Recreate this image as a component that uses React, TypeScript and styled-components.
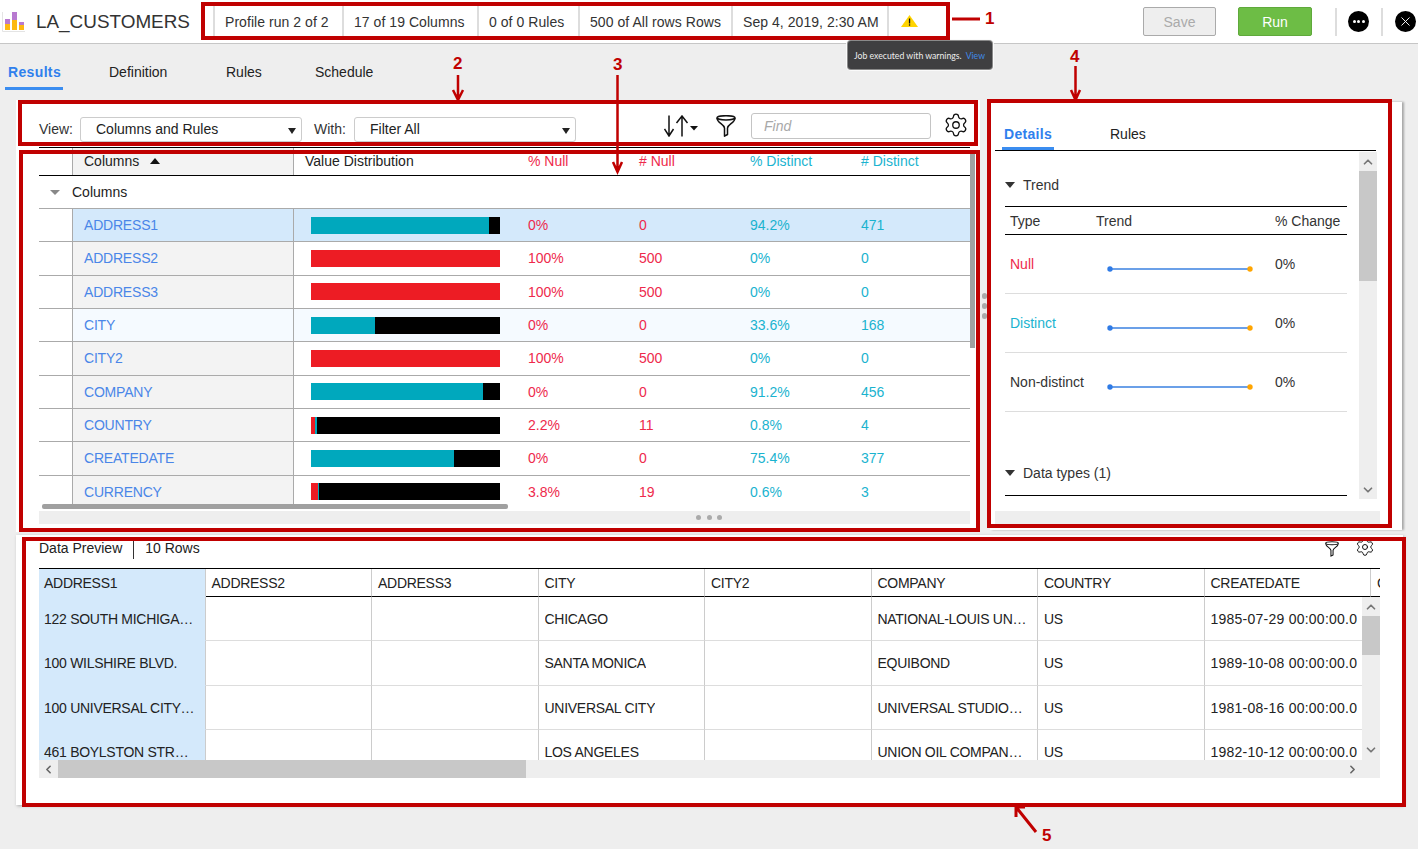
import React from 'react';
import styled, { createGlobalStyle } from 'styled-components';
import { ChevronUp, ChevronDown, ChevronLeft, ChevronRight, Settings, X } from 'lucide-react';

const Global = createGlobalStyle`
  html, body { margin: 0; padding: 0; background: #eeeeee; }
  body { font-family: "Liberation Sans", Arial, sans-serif; font-size: 14px; color: #222; }
  * { box-sizing: border-box; }
`;

const BLUE = '#4a86e8';
const RED = '#ee2a4c';
const TEAL = '#1ab3cf';
const ANNOT = '#c00000';

const Page = styled.div`position: relative; width: 1418px; height: 849px; overflow: hidden; background: #eeeeee;`;

/* header */
const Header = styled.header`display: flex; align-items: center; height: 44px; background: #fff; border-bottom: 1px solid #c6c6c6;`;
const LogoBox = styled.div`width: 36px; display: flex; align-items: center; height: 100%;`;
const Title = styled.h1`width: 177px; margin: 0; font-size: 18.9px; font-weight: 400; color: #333; white-space: nowrap; line-height: 43px;`;
const ChipBar = styled.div`display: grid; grid-template-columns: 129px 135px 101px 153px 156px 60px; height: 31px;`;
const Chip = styled.div`display: flex; align-items: center; padding-left: 10px; border-left: 2px solid #dddddd; color: #333; white-space: nowrap; letter-spacing: 0.05px;`;
const Actions = styled.div`margin-left: auto; display: flex; align-items: center; padding-right: 2px;`;
const SaveButton = styled.button`width: 73px; height: 29px; background: #eeeeee; border: 1px solid #aaa; border-radius: 2px; color: #aaa; font: inherit;`;
const RunButton = styled.button`width: 74px; height: 29px; margin-left: 22px; background: #6dbd45; border: 1px solid #5fa93b; border-radius: 2px; color: #fff; font: inherit;`;
const VDivider = styled.span`width: 2px; height: 28px; background: #dddddd; margin-left: ${p => p.$ml}px;`;
const RoundIcon = styled.span`width: 21px; height: 21px; margin-left: ${p => p.$ml}px; border-radius: 50%; background: #000; color: #fff; display: flex; align-items: center; justify-content: center; gap: 1.5px;`;
const Pip = styled.i`width: 3px; height: 3px; border-radius: 50%; background: #fff;`;

/* tooltip */
const Tooltip = styled.div`
  position: absolute; left: 848px; top: 41px; width: 144px; height: 28px; background: #3f3f41; color: #eee;
  border-radius: 3px; box-shadow: 0 0 0 1px #8a8a8a, 0 0 0 2px #fafafa; font-family: "Lato", sans-serif; font-size: 8.7px;
  display: flex; align-items: center; padding-left: 6px; white-space: nowrap; z-index: 2;
`;
const TooltipLink = styled.span`color: #3f8ae8; margin-left: 4px;`;

/* tabs */
const TabRow = styled.nav`display: grid; grid-template-columns: 101px 117px 89px 100px; height: 46px; padding-left: 5px; align-items: end;`;
const Tab = styled.div`
  justify-self: start; padding: 1px 3px 0; height: 34px; display: flex; align-items: center; white-space: nowrap;
  width: ${p => (p.$active ? '58px' : 'auto')};
  color: ${p => (p.$active ? '#2f80ed' : '#222')}; font-weight: ${p => (p.$active ? 700 : 400)};
  letter-spacing: ${p => (p.$active ? '0.35px' : '0')};
  border-bottom: 3px solid ${p => (p.$active ? '#3b8df0' : 'transparent')};
`;

const Top = styled.div`display: flex; margin-top: 10px; padding-left: 16px; height: 432px;`;

/* left card */
const LeftCard = styled.section`width: 964px; height: 432px; background: #fff;`;
const Toolbar = styled.div`display: flex; align-items: flex-end; height: 47px; padding: 0 0 5px 23px;`;
const FieldLabel = styled.label`width: ${p => p.$w}px; margin-left: ${p => p.$ml || 0}px; height: 25px; padding-bottom: 2px; display: flex; align-items: center; color: #333;`;
const Select = styled.div`
  position: relative; width: 222px; height: 25px; border: 1px solid #ccc; border-radius: 3px; background: #fff;
  display: flex; align-items: center; padding: 0 0 2px 15px; color: #222;
  &::after { content: ''; position: absolute; right: 5px; top: 10px; border: 4.5px solid transparent; border-top: 6px solid #222; border-bottom: 0; }
`;
const IconSlot = styled.span`display: flex; margin-left: ${p => p.$ml}px; margin-bottom: ${p => p.$mb || 0}px;`;
const FindInput = styled.div`
  width: 180px; height: 26px; margin-left: 15px; margin-bottom: 3px; border: 1px solid #c4c4c4; border-radius: 3px;
  display: flex; align-items: center; padding-left: 12px; font-style: italic; color: #a8a8a8;
`;

const TableWrap = styled.div`position: relative; margin-left: 23px; width: 931px; border-top: 1px solid #000;`;
const COLS = '34px 221px 234px 111px 111px 111px 109px';
const HeadRow = styled.div`display: grid; grid-template-columns: ${COLS}; height: 28px; border-bottom: 1px solid #000; color: #222;`;
const HeadCell = styled.div`display: flex; align-items: center; padding-left: ${p => p.$pl || 0}px; padding-bottom: 2px; color: ${p => p.$color || '#222'};`;
const HeadGutter = styled.div`border-right: 1px solid #aaa;`;
const HeadName = styled(HeadCell)`background: #f3f3f3; border-right: 1px solid #aaa;`;
const SortCaret = styled.i`margin-left: 11px; border: 5px solid transparent; border-bottom: 6px solid #111; border-top: 0;`;
const TableBody = styled.div`height: 328px; overflow: hidden;`;
const GroupRow = styled.div`display: flex; align-items: center; height: 33px; padding-left: 11px; border-bottom: 1px solid #aaa;`;
const GroupCaret = styled.i`width: 0; margin-right: 12px; border: 5.5px solid transparent; border-top: 5px solid #888; border-bottom: 0;`;
const Row = styled.div`
  display: grid; grid-template-columns: ${COLS}; height: 33.33px; border-bottom: 1px solid #aaa;
`;
const Gutter = styled.div`border-right: 1px solid #aaa;`;
const NameCell = styled.div`
  display: flex; align-items: center; padding-left: 11px; color: ${BLUE}; border-right: 1px solid #aaa; letter-spacing: -0.2px;
  background: ${p => p.$bg || '#f3f3f3'};
`;
const DistCell = styled.div`display: flex; align-items: center; padding-left: 17px; background: ${p => p.$bg || 'transparent'};`;
const Bar = styled.div`display: flex; width: 189px; height: 17px; background: #000;`;
const Seg = styled.div`height: 100%; background: ${p => p.$c};`;
const NumCell = styled.div`display: flex; align-items: center; color: ${p => p.$color}; background: ${p => p.$bg || 'transparent'};`;
const HThumb = styled.div`width: 466px; height: 5px; margin: 0 0 2px 3px; background: #a0a0a0; border-radius: 2px;`;
const DotBand = styled.div`display: flex; align-items: center; gap: 5.5px; height: 13px; padding-left: 657px; background: #eeeeee;`;
const GreyDot = styled.i`width: 5px; height: 5px; border-radius: 50%; background: #aaa;`;
const VThumb = styled.div`position: absolute; left: 931px; top: 4px; width: 5px; height: 196px; background: #a0a0a0;`;

const Splitter = styled.div`width: 10px; padding: 193px 1px 0 0; display: flex; flex-direction: column; gap: 4.5px; align-items: center;`;
const SplitDot = styled.i`width: 5.5px; height: 5.5px; border-radius: 50%; background: #aaa;`;

/* right card */
const RightCard = styled.aside`width: 412px; height: 428px; margin-top: 2px; padding-left: 5px; background: #fff; box-shadow: 2px 0 2px #a8a8a8;`;
const SideTabs = styled.div`display: flex; width: 381px; height: 49px; border-bottom: 1px solid #000; padding-left: 7px; align-items: flex-end;`;
const SideTab = styled.div`
  height: 35px; padding: 5px 2px 0; display: flex; align-items: center; width: ${p => (p.$active ? '52px' : 'auto')}; margin-left: ${p => p.$ml || 0}px;
  color: ${p => (p.$active ? '#2f80ed' : '#222')}; font-weight: ${p => (p.$active ? 700 : 400)};
  letter-spacing: ${p => (p.$active ? '0.3px' : '0')};
  border-bottom: 3px solid ${p => (p.$active ? '#3b8df0' : 'transparent')};
`;
const SideBody = styled.div`display: flex; height: 347px; margin-top: 1px;`;
const SideContent = styled.div`width: 364px; padding: 23px 12px 0 10px;`;
const SectionHead = styled.div`display: flex; align-items: center; height: 20px; color: #333; margin-top: ${p => p.$mt || 0}px;`;
const SectionCaret = styled.i`width: 0; margin-right: 8px; border: 5px solid transparent; border-top: 6px solid #333; border-bottom: 0;`;
const TrendGrid = styled.div`margin-top: 11px; border-top: 1px solid #000;`;
const TrendHead = styled.div`display: grid; grid-template-columns: 86px 179px 1fr; height: 28px; padding-left: 5px; align-items: center; border-bottom: 1px solid #000; color: #333;`;
const TrendRow = styled.div`display: grid; grid-template-columns: 86px 179px 1fr; height: 59px; padding-left: 5px; align-items: center; border-bottom: 1px solid #ddd; color: #333;`;
const TrendType = styled.span`color: ${p => p.$color || '#333'}; white-space: nowrap;`;
const Spark = styled.svg`display: block;`;
const SectionRule = styled.div`margin-top: 12px; border-top: 1px solid #000;`;
const Scroll = styled.div`display: flex; flex-direction: column; align-items: center; width: 18px; background: #eeeeee; color: #777;`;
const ScrollArrow = styled.div`display: flex; align-items: center; justify-content: center; height: ${p => p.$h}px; width: 100%; padding-bottom: ${p => p.$pb || 0}px;`;
const ScrollThumb = styled.div`width: 100%; height: ${p => p.$h}px; background: #c8c8c8;`;
const ScrollFill = styled.div`flex: 1;`;
const SideBand = styled.div`width: 385px; height: 14px; margin-top: 12px; background: #eeeeee;`;

/* bottom card */
const Preview = styled.section`width: 1387px; height: 270px; margin: 3px 0 0 16px; padding-left: 23px; background: #fff; box-shadow: 1px 1px 3px #aaa;`;
const PreviewBar = styled.div`display: flex; align-items: flex-start; height: 33px; padding-top: 4px; width: 1341px;`;
const PreviewText = styled.span`line-height: 18px; color: #222;`;
const PreviewDivider = styled.span`width: 1px; height: 18px; margin: 2px 11px 0 11px; background: #333;`;
const PreviewIcons = styled.div`margin: -2.5px 0 0 auto; height: 20px; display: flex; align-items: flex-end; gap: 16px; padding-right: 5px;`;
const PTable = styled.div`width: 1341px; border-top: 1px solid #000; overflow: hidden;`;
const PHead = styled.div`display: grid; grid-template-columns: repeat(9, 166.5px); height: 28px;`;
const PHeadCell = styled.div`
  display: flex; align-items: center; padding-left: ${p => (p.$first ? 5 : 6)}px; white-space: nowrap; overflow: hidden; letter-spacing: -0.28px;
  background: ${p => (p.$first ? '#d4e9fb' : '#fff')}; color: #222;
  border-right: 1px solid #ccc; border-bottom: 1px solid ${p => (p.$first ? '#d4e9fb' : '#000')};
`;
const PBody = styled.div`display: grid; grid-template-columns: 1323px 18px; grid-template-rows: 163px 18px;`;
const PRows = styled.div`overflow: hidden;`;
const PRow = styled.div`display: grid; grid-template-columns: repeat(8, 166.5px); height: 44.33px;`;
const PCell = styled.div`
  display: flex; align-items: center; padding: 1px 7px 0 ${p => (p.$first ? 5 : 6)}px; min-width: 0; color: #222;
  letter-spacing: ${p => (p.$date ? '0.24px' : '-0.28px')};
  background: ${p => (p.$first ? '#d4e9fb' : '#fff')};
  border-right: 1px solid #ccc; border-bottom: 1px solid ${p => (p.$first ? '#d4e9fb' : '#ddd')};
`;
const PCellText = styled.span`overflow: hidden; text-overflow: ellipsis; white-space: nowrap;`;
const PVScroll = styled(Scroll)`grid-row: 1 / span 2; grid-column: 2;`;
const PHScroll = styled.div`display: flex; align-items: center; background: #eeeeee; color: #666;`;
const PHThumb = styled.div`width: 468px; height: 100%; background: #c8c8c8;`;
const PHArrow = styled.div`width: 19px; display: flex; align-items: center; justify-content: center;`;
const PHFill = styled.div`flex: 1;`;

/* annotations */
const CalloutBox = styled.div`
  position: absolute; left: ${p => p.$x}px; top: ${p => p.$y}px; width: ${p => p.$w}px; height: ${p => p.$h}px;
  border: 4px solid ${ANNOT}; pointer-events: none; z-index: 3;
`;
const CalloutNum = styled.span`
  position: absolute; left: ${p => p.$x}px; top: ${p => p.$y}px; color: ${ANNOT}; font-weight: 700; font-size: 17px; line-height: 18px; z-index: 3;
`;
const CalloutArrows = styled.svg`position: absolute; left: 0; top: 0; pointer-events: none; z-index: 3;`;

const Funnel = ({ w = 20, h = 22 }: { w?: number; h?: number }) => (
  <svg width={w} height={h} viewBox="0 0 20 22" fill="none" stroke="#111" strokeWidth="1.5">
    <ellipse cx="10" cy="2.8" rx="9" ry="2.1" />
    <path d="M1 3c0 5 7 6 7.5 10v8.2l3-1.7V13C12 9 19 8 19 3" strokeLinejoin="round" />
  </svg>
);

const SortIcon = () => (
  <svg width="34" height="22" viewBox="0 0 34 22" fill="none" stroke="#111" strokeWidth="1.5">
    <path d="M5 0.5v20M0.5 14l4.5 7 4.5-7" />
    <path d="M18 21.5v-20M12.5 8l5.5-7 5.5 7" />
    <path d="M26 11h8l-4 4.5z" fill="#111" stroke="none" />
  </svg>
);

const Logo = () => (
  <svg width="36" height="36" viewBox="0 0 36 36">
    <path d="M2.5 8v19.5H25" fill="none" stroke="#e4e4e4" strokeWidth="1" />
    <rect x="5" y="15" width="5" height="5" fill="#b87ad0" />
    <rect x="5" y="20" width="5" height="6" fill="#fdb913" />
    <rect x="12" y="8" width="5" height="8" fill="#b87ad0" />
    <rect x="12" y="16" width="5" height="10" fill="#fdb913" />
    <rect x="19" y="18" width="5" height="3" fill="#b87ad0" />
    <rect x="19" y="21" width="5" height="5" fill="#fdb913" />
  </svg>
);

const Warn = () => (
  <svg width="17" height="12" viewBox="0 0 17 12">
    <path d="M8.5 0l8.5 12H0z" fill="#ffd400" />
    <rect x="7.9" y="3.5" width="1.3" height="5" fill="#111" />
    <rect x="7.9" y="9.3" width="1.3" height="1.4" fill="#111" />
  </svg>
);

type P = { name: string; n: number; d: number; nul: string; cn: string; pd: string; cd: string; bg?: string };
const rows: P[] = [
  { name: 'ADDRESS1', n: 0, d: 94.2, nul: '0%', cn: '0', pd: '94.2%', cd: '471', bg: '#d4e9fb' },
  { name: 'ADDRESS2', n: 100, d: 0, nul: '100%', cn: '500', pd: '0%', cd: '0' },
  { name: 'ADDRESS3', n: 100, d: 0, nul: '100%', cn: '500', pd: '0%', cd: '0' },
  { name: 'CITY', n: 0, d: 33.6, nul: '0%', cn: '0', pd: '33.6%', cd: '168', bg: '#f5faff' },
  { name: 'CITY2', n: 100, d: 0, nul: '100%', cn: '500', pd: '0%', cd: '0' },
  { name: 'COMPANY', n: 0, d: 91.2, nul: '0%', cn: '0', pd: '91.2%', cd: '456' },
  { name: 'COUNTRY', n: 2.2, d: 0.8, nul: '2.2%', cn: '11', pd: '0.8%', cd: '4' },
  { name: 'CREATEDATE', n: 0, d: 75.4, nul: '0%', cn: '0', pd: '75.4%', cd: '377' },
  { name: 'CURRENCY', n: 3.8, d: 0.6, nul: '3.8%', cn: '19', pd: '0.6%', cd: '3' },
];

const pCols = ['ADDRESS1', 'ADDRESS2', 'ADDRESS3', 'CITY', 'CITY2', 'COMPANY', 'COUNTRY', 'CREATEDATE', 'CURRENCY'];
const pRows = [
  ['122 SOUTH MICHIGAN AVE.', '', '', 'CHICAGO', '', 'NATIONAL-LOUIS UNIVERSITY', 'US', '1985-07-29 00:00:00.0'],
  ['100 WILSHIRE BLVD.', '', '', 'SANTA MONICA', '', 'EQUIBOND', 'US', '1989-10-08 00:00:00.0'],
  ['100 UNIVERSAL CITY PLAZA', '', '', 'UNIVERSAL CITY', '', 'UNIVERSAL STUDIOS INC.', 'US', '1981-08-16 00:00:00.0'],
  ['461 BOYLSTON STREET', '', '', 'LOS ANGELES', '', 'UNION OIL COMPANY OF CALIFORNIA', 'US', '1982-10-12 00:00:00.0'],
];

const trends = [
  { label: 'Null', color: RED },
  { label: 'Distinct', color: TEAL },
  { label: 'Non-distinct' },
];

export default function App() {
  return (
    <Page>
      <Global />
      <Header>
        <LogoBox><Logo /></LogoBox>
        <Title>LA_CUSTOMERS</Title>
        <ChipBar>
          <Chip>Profile run 2 of 2</Chip>
          <Chip>17 of 19 Columns</Chip>
          <Chip>0 of 0 Rules</Chip>
          <Chip>500 of All rows Rows</Chip>
          <Chip>Sep 4, 2019, 2:30 AM</Chip>
          <Chip><IconSlot $ml={2} $mb={1}><Warn /></IconSlot></Chip>
        </ChipBar>
        <Actions>
          <SaveButton>Save</SaveButton>
          <RunButton>Run</RunButton>
          <VDivider $ml={23} />
          <RoundIcon $ml={11}><Pip /><Pip /><Pip /></RoundIcon>
          <VDivider $ml={12} />
          <RoundIcon $ml={12}><X size={15} strokeWidth={1.5} /></RoundIcon>
        </Actions>
      </Header>

      <TabRow>
        <Tab $active>Results</Tab>
        <Tab>Definition</Tab>
        <Tab>Rules</Tab>
        <Tab>Schedule</Tab>
      </TabRow>

      <Top>
        <LeftCard>
          <Toolbar>
            <FieldLabel $w={41}>View:</FieldLabel>
            <Select>Columns and Rules</Select>
            <FieldLabel $w={40} $ml={12}>With:</FieldLabel>
            <Select>Filter All</Select>
            <IconSlot $ml={88} $mb={5}><SortIcon /></IconSlot>
            <IconSlot $ml={18} $mb={5}><Funnel /></IconSlot>
            <FindInput>Find</FindInput>
            <IconSlot $ml={12} $mb={4}><Settings size={26} strokeWidth={1.2} color="#111" /></IconSlot>
          </Toolbar>
          <TableWrap>
            <HeadRow>
              <HeadGutter />
              <HeadName $pl={11}>Columns<SortCaret /></HeadName>
              <HeadCell $pl={11}>Value Distribution</HeadCell>
              <HeadCell $color={RED}>% Null</HeadCell>
              <HeadCell $color={RED}># Null</HeadCell>
              <HeadCell $color={TEAL}>% Distinct</HeadCell>
              <HeadCell $color={TEAL}># Distinct</HeadCell>
            </HeadRow>
            <TableBody>
              <GroupRow><GroupCaret />Columns</GroupRow>
              {rows.map(r => (
                <Row key={r.name}>
                  <Gutter />
                  <NameCell $bg={r.bg}>{r.name}</NameCell>
                  <DistCell $bg={r.bg}>
                    <Bar>
                      <Seg $c="#ed1c24" style={{ width: `${r.n}%` }} />
                      <Seg $c="#00a8bd" style={{ width: `${r.d}%` }} />
                    </Bar>
                  </DistCell>
                  <NumCell $color={RED} $bg={r.bg}>{r.nul}</NumCell>
                  <NumCell $color={RED} $bg={r.bg}>{r.cn}</NumCell>
                  <NumCell $color={TEAL} $bg={r.bg}>{r.pd}</NumCell>
                  <NumCell $color={TEAL} $bg={r.bg}>{r.cd}</NumCell>
                </Row>
              ))}
            </TableBody>
            <HThumb />
            <DotBand><GreyDot /><GreyDot /><GreyDot /></DotBand>
            <VThumb />
          </TableWrap>
        </LeftCard>

        <Splitter><SplitDot /><SplitDot /><SplitDot /></Splitter>

        <RightCard>
          <SideTabs>
            <SideTab $active>Details</SideTab>
            <SideTab $ml={54}>Rules</SideTab>
          </SideTabs>
          <SideBody>
            <SideContent>
              <SectionHead><SectionCaret />Trend</SectionHead>
              <TrendGrid>
                <TrendHead><span>Type</span><span>Trend</span><span>% Change</span></TrendHead>
                {trends.map(t => (
                  <TrendRow key={t.label}>
                    <TrendType $color={t.color}>{t.label}</TrendType>
                    <Spark width="179" height="58" viewBox="0 0 179 58">
                      <line x1="14" y1="34" x2="154" y2="34" stroke="#3a80e0" strokeWidth="1.6" />
                      <circle cx="14" cy="34" r="2.7" fill="#2f7be6" />
                      <circle cx="154" cy="34" r="2.7" fill="#ffa500" />
                    </Spark>
                    <span>0%</span>
                  </TrendRow>
                ))}
              </TrendGrid>
              <SectionHead $mt={51}><SectionCaret />Data types (1)</SectionHead>
              <SectionRule />
            </SideContent>
            <Scroll>
              <ScrollArrow $h={19}><ChevronUp size={14} strokeWidth={3} /></ScrollArrow>
              <ScrollThumb $h={110} />
              <ScrollFill />
              <ScrollArrow $h={19}><ChevronDown size={14} strokeWidth={3} /></ScrollArrow>
            </Scroll>
          </SideBody>
          <SideBand />
        </RightCard>
      </Top>

      <Preview>
        <PreviewBar>
          <PreviewText>Data Preview</PreviewText>
          <PreviewDivider />
          <PreviewText>10 Rows</PreviewText>
          <PreviewIcons>
            <Funnel w={14} h={16} />
            <Settings size={20} strokeWidth={1.2} color="#111" />
          </PreviewIcons>
        </PreviewBar>
        <PTable>
          <PHead>
            {pCols.map((c, i) => <PHeadCell key={c} $first={i === 0}>{c}</PHeadCell>)}
          </PHead>
          <PBody>
            <PRows>
              {pRows.map(r => (
                <PRow key={r[0]}>
                  {r.map((v, i) => <PCell key={i} $first={i === 0} $date={i === 7}><PCellText>{v}</PCellText></PCell>)}
                </PRow>
              ))}
            </PRows>
            <PVScroll>
              <ScrollArrow $h={19}><ChevronUp size={14} strokeWidth={3} /></ScrollArrow>
              <ScrollThumb $h={39} />
              <ScrollFill />
              <ScrollArrow $h={48} $pb={8}><ChevronDown size={14} strokeWidth={3} /></ScrollArrow>
            </PVScroll>
            <PHScroll>
              <PHArrow><ChevronLeft size={13} strokeWidth={3} /></PHArrow>
              <PHThumb />
              <PHFill />
              <PHArrow><ChevronRight size={13} strokeWidth={3} /></PHArrow>
            </PHScroll>
          </PBody>
        </PTable>
      </Preview>

      <Tooltip>Job executed with warnings.<TooltipLink>View</TooltipLink></Tooltip>

      <CalloutBox $x={201} $y={2} $w={749} $h={38} />
      <CalloutBox $x={18} $y={100} $w={960} $h={46} />
      <CalloutBox $x={19} $y={150} $w={961} $h={382} />
      <CalloutBox $x={987} $y={99} $w={405} $h={429} />
      <CalloutBox $x={22} $y={537} $w={1384} $h={270} />
      <CalloutArrows width="1418" height="849" viewBox="0 0 1418 849" fill="none" stroke={ANNOT}>
        <path d="M952 19h28" strokeWidth="3" />
        <path d="M458 75v24M453 90l5 10 5-10" strokeWidth="2.5" />
        <path d="M617.5 75v97M613 162l4.5 10 4.5-10" strokeWidth="2.5" />
        <path d="M1075.5 66v33M1071 90l4.5 10 4.5-10" strokeWidth="2.5" />
        <path d="M1036 832l-20-25M1016 817v-10h9" strokeWidth="3" />
      </CalloutArrows>
      <CalloutNum $x={985} $y={10}>1</CalloutNum>
      <CalloutNum $x={453} $y={55}>2</CalloutNum>
      <CalloutNum $x={613} $y={56}>3</CalloutNum>
      <CalloutNum $x={1070} $y={48}>4</CalloutNum>
      <CalloutNum $x={1042} $y={827}>5</CalloutNum>
    </Page>
  );
}
